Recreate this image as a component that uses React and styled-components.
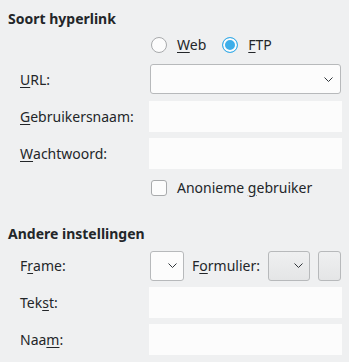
import React from "react";
import styled, { createGlobalStyle } from "styled-components";

const Global = createGlobalStyle`
  html, body { margin: 0; padding: 0; background: #eff0f1; }
`

const Page = styled.div`
    width: 349px;
    height: 362px;
    box-sizing: border-box;
    padding: 9px 8px 0;
    background: #eff0f1;
    color: #232629;
    font: 400 14px "Noto Sans", "DejaVu Sans", sans-serif;
    overflow: hidden;
`

const SectionTitle = styled.div`
    font-weight: 700;
    height: 19px;
    line-height: 19px;
    margin-top: ${({$top}) => $top || 0}px;
`

const OptionRow = styled.div`
    display: flex;
    align-items: center;
    height: 18px;
    margin-top: ${({$top}) => $top || 0}px;
    padding-left: 143px;
`

const Option = styled.label`
    display: flex;
    align-items: center;
    gap: 10px;
    margin-right: 16px;
    line-height: 18px;
`

const Radio = styled.span`
    width: 16px;
    height: 16px;
    box-sizing: border-box;
    border-radius: 50%;
    border: 1px solid ${({$checked}) => ($checked ? '#3daee9' : '#a8aaac')};
    background: ${({$checked}) => ($checked ? '#3daee9' : '#fcfcfc')};
    box-shadow: ${({$checked}) => ($checked ? 'inset 0 0 0 2px #fcfcfc' : 'none')};
`

const Box = styled.span`
    width: 16px;
    height: 16px;
    box-sizing: border-box;
    border-radius: 3px;
    border: 1px solid #a8aaac;
    background: #fcfcfc;
`

const Form = styled.div`
    display: grid;
    grid-template-columns: 129px 193px;
    grid-auto-rows: 31px;
    row-gap: 6px;
    padding-left: 12px;
    margin-top: ${({$top}) => $top || 0}px;
`

const Label = styled.label`
    display: flex;
    align-items: center;
    white-space: nowrap;
`

const U = styled.span`
    text-decoration: underline;
    text-underline-offset: 2px;
`

const Input = styled.input`
    width: 193px;
    height: 31px;
    box-sizing: border-box;
    border: none;
    background: #fcfcfc;
    outline: none;
    padding: 0 6px;
    font: inherit;
`

const Combo = styled.div`
    width: ${({$w}) => $w}px;
    height: 30px;
    box-sizing: border-box;
    margin-left: ${({$ml}) => $ml || 0}px;
    border: 1px solid #b7b9bb;
    border-radius: 3px;
    background: ${({$flat}) => ($flat ? 'linear-gradient(#eff0f1, #e4e5e6)' : '#fcfcfc')};
    display: flex;
    align-items: center;
    justify-content: flex-end;
    padding-right: ${({$pr}) => $pr || 6}px;
`

const Button = styled.div`
    width: 23px;
    height: 30px;
    box-sizing: border-box;
    border: 1px solid #b7b9bb;
    border-radius: 3px;
    background: linear-gradient(#eff0f1, #e4e5e6);
`

const Inline = styled.div`
    display: flex;
    align-items: center;
    gap: 8px;
`

const CheckRow = styled.label`
    display: flex;
    align-items: center;
    gap: 10px;
    height: 17px;
    padding-left: 143px;
    margin-top: ${({$top}) => $top || 0}px;
`

const Chevron = () => (
    <svg width="9" height="5" viewBox="0 0 9 5">
        <polyline points="0.5,0.5 4.5,4.5 8.5,0.5" fill="none" stroke="#31363b" strokeWidth="1" />
    </svg>
)

const App = () => {
    return(
        <>
            <Global/>
            <Page>
                <SectionTitle>Soort hyperlink</SectionTitle>
                <OptionRow $top={8}>
                    <Option><Radio/><span><U>W</U>eb</span></Option>
                    <Option><Radio $checked/><span><U>F</U>TP</span></Option>
                </OptionRow>
                <Form $top={10}>
                    <Label><U>U</U>RL:</Label>
                    <Combo $w={191} $ml={1} $pr={7}><Chevron/></Combo>
                    <Label><U>G</U>ebruikersnaam:</Label>
                    <Input/>
                    <Label><U>W</U>achtwoord:</Label>
                    <Input type="password"/>
                </Form>
                <CheckRow $top={10}>
                    <Box/><span>Anonieme <U>g</U>ebruiker</span>
                </CheckRow>
                <SectionTitle $top={28}>Andere instellingen</SectionTitle>
                <Form $top={7}>
                    <Label>F<U>r</U>ame:</Label>
                    <Inline>
                        <Combo $w={34} $ml={1}><Chevron/></Combo>
                        <Label>F<U>o</U>rmulier:</Label>
                        <Combo $w={42} $flat><Chevron/></Combo>
                        <Button/>
                    </Inline>
                    <Label>Tek<U>s</U>t:</Label>
                    <Input/>
                    <Label>Naa<U>m</U>:</Label>
                    <Input/>
                </Form>
            </Page>
        </>
    );
};

export default App;
